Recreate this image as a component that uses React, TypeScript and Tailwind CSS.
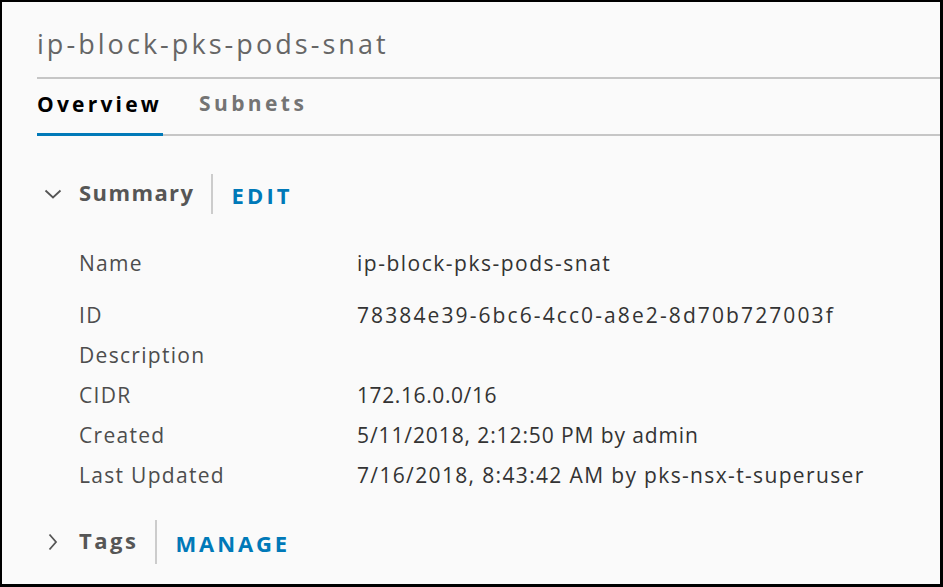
import React from "react";

const font = { fontFamily: '"Open Sans", "Liberation Sans", sans-serif' };

function Row({ label, value, h, vt }: { label: string; value: string; h: string; vt: string }) {
  return (
    <div className={`flex items-center ${h}`}>
      <div className="w-[278px] text-[21px] tracking-[1.3px] text-[#4d4d4d]">{label}</div>
      <div className={`text-[21px] text-[#333333] ${vt}`}>{value}</div>
    </div>
  );
}

export default function App() {
  return (
    <div className="w-[943px] h-[587px] bg-black" style={font}>
      <div className="w-[943px] h-[587px] border-l-2 border-t-2 border-r-[3px] border-b-[3px] border-black bg-[#fafafa] pl-[35px] overflow-hidden">
        <div className="h-[75px] pt-[24px] text-[27px] leading-[36px] tracking-[3.05px] font-normal text-[#666666]">ip-block-pks-pods-snat</div>
        <div className="h-[2px] bg-[#c6c6c6]" />
        <div className="flex items-end h-[57px] border-b-2 border-[#c6c6c6]">
          <div className="w-[126px] h-[57px] pt-[10px] border-b-[3px] border-[#0079b8] -mb-[2px] text-[21px] font-bold tracking-[3.2px] text-black leading-[30px]">Overview</div>
          <div className="ml-[36px] h-[57px] pt-[11px] text-[21px] font-bold tracking-[3.4px] text-[#747474] leading-[30px]">Subnets</div>
        </div>
        <div className="flex items-center h-[40px] mt-[38px]">
          <svg width="18" height="12" viewBox="0 0 18 12" className="ml-[7px]">
            <path d="M1.5 2.5 L9 9.5 L16.5 2.5" fill="none" stroke="#555" strokeWidth="1.8" />
          </svg>
          <div className="ml-[17px] mb-[3px] text-[22px] font-bold tracking-[1.4px] text-[#565656]">Summary</div>
          <div className="ml-[17px] w-[2px] h-[40px] bg-[#cccccc]" />
          <div className="ml-[18px] text-[22px] font-bold tracking-[3.2px] text-[#0079b8] mt-[2px]">EDIT</div>
        </div>
        <div className="pl-[42px] mt-[32px]">
          <Row label="Name" value="ip-block-pks-pods-snat" h="h-[36px]" vt="tracking-[1.5px]" />
          <Row label="ID" value="78384e39-6bc6-4cc0-a8e2-8d70b727003f" h="h-[40px] mt-[14px]" vt="tracking-[2.1px]" />
          <Row label="Description" value="" h="h-[40px]" vt="" />
          <Row label="CIDR" value="172.16.0.0/16" h="h-[40px]" vt="tracking-[0.6px]" />
          <Row label="Created" value="5/11/2018, 2:12:50 PM by admin" h="h-[40px]" vt="tracking-[0.9px]" />
          <Row label="Last Updated" value="7/16/2018, 8:43:42 AM by pks-nsx-t-superuser" h="h-[40px]" vt="tracking-[1.35px]" />
        </div>
        <div className="flex items-center h-[44px] mt-[24px]">
          <svg width="12" height="18" viewBox="0 0 12 18" className="ml-[10px]">
            <path d="M2.5 1.5 L9 9 L2.5 16.5" fill="none" stroke="#555" strokeWidth="1.8" />
          </svg>
          <div className="ml-[20px] mb-[3px] text-[22px] font-bold tracking-[2.5px] text-[#565656]">Tags</div>
          <div className="ml-[17px] w-[2px] h-[44px] bg-[#cccccc]" />
          <div className="ml-[18px] text-[22px] font-bold tracking-[2.9px] text-[#0079b8] mt-[2px]">MANAGE</div>
        </div>
      </div>
    </div>
  );
}
